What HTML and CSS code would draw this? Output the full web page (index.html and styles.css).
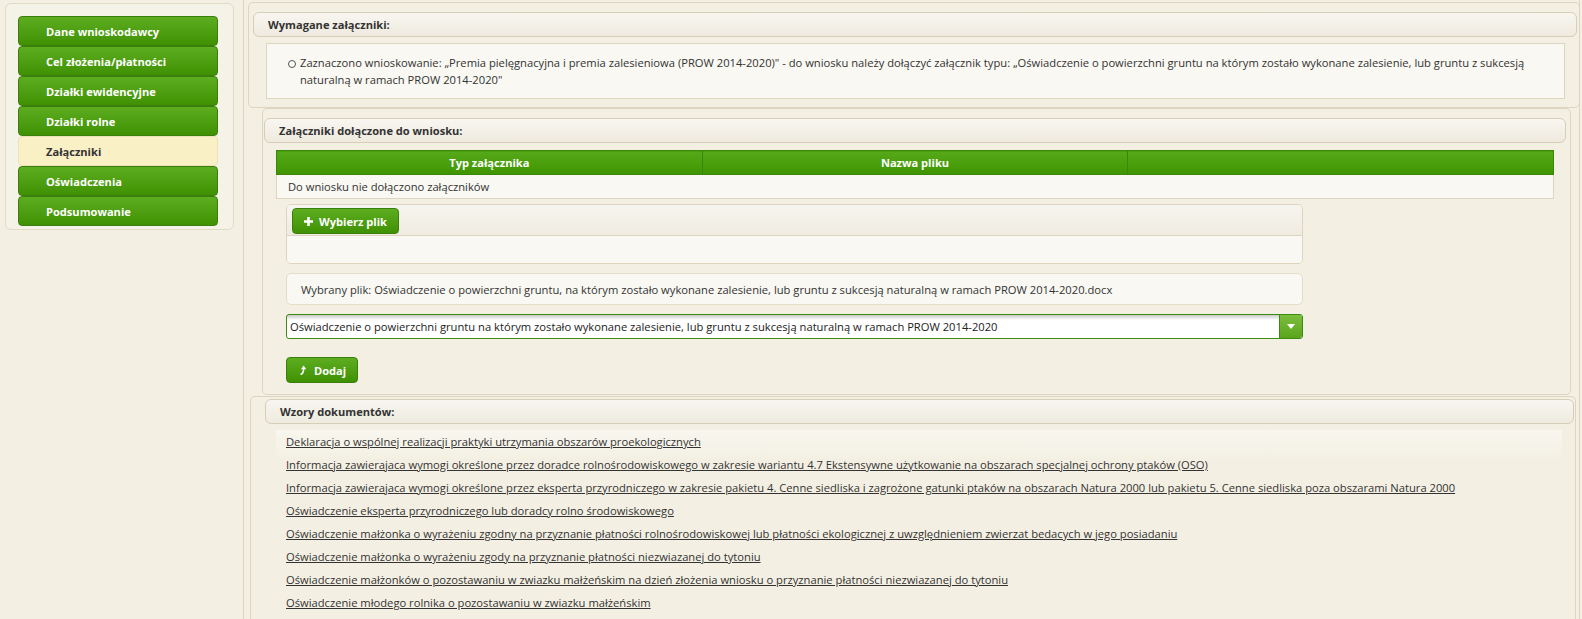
FILE: index.html
```html
<!DOCTYPE html>
<html lang="pl">
<head>
<meta charset="utf-8">
<title>Załączniki</title>
<link rel="stylesheet" href="styles.css">
</head>
<body>
<div class="page">
  <aside class="sidebar">
    <nav class="menu">
      <a class="menu-item">Dane wnioskodawcy</a>
      <a class="menu-item">Cel złożenia/płatności</a>
      <a class="menu-item">Działki ewidencyjne</a>
      <a class="menu-item">Działki rolne</a>
      <a class="menu-item active">Załączniki</a>
      <a class="menu-item">Oświadczenia</a>
      <a class="menu-item">Podsumowanie</a>
    </nav>
  </aside>
  <main class="main">
    <section class="sec sec-req">
      <div class="bar">Wymagane załączniki:</div>
      <div class="req-box">
        <ul class="req-list">
          <li>Zaznaczono wnioskowanie: „Premia pielęgnacyjna i premia zalesieniowa (PROW 2014-2020)" - do wniosku należy dołączyć załącznik typu: „Oświadczenie o powierzchni gruntu na którym zostało wykonane zalesienie, lub gruntu z sukcesją naturalną w ramach PROW 2014-2020"</li>
        </ul>
      </div>
    </section>
    <section class="sec sec-att">
      <div class="bar">Załączniki dołączone do wniosku:</div>
      <table class="att-table">
        <thead>
          <tr><th>Typ załącznika</th><th>Nazwa pliku</th><th></th></tr>
        </thead>
        <tbody>
          <tr><td colspan="3">Do wniosku nie dołączono załączników</td></tr>
        </tbody>
      </table>
      <div class="upload">
        <div class="upload-top">
          <button class="btn btn-pick"><svg class="ico" width="9" height="9" viewBox="0 0 9 9"><path d="M3.2 0h2.6v3.2H9v2.6H5.8V9H3.2V5.8H0V3.2h3.2z" fill="#fff"/></svg>Wybierz plik</button>
        </div>
        <div class="upload-body"></div>
      </div>
      <div class="chosen">Wybrany plik: Oświadczenie o powierzchni gruntu, na którym zostało wykonane zalesienie, lub gruntu z sukcesją naturalną w ramach PROW 2014-2020.docx</div>
      <div class="select">
        <span class="select-text">Oświadczenie o powierzchni gruntu na którym zostało wykonane zalesienie, lub gruntu z sukcesją naturalną w ramach PROW 2014-2020</span>
        <span class="select-arrow"><svg width="8" height="5" viewBox="0 0 8 5"><path d="M0 0h8L4 5z" fill="#fff"/></svg></span>
      </div>
      <button class="btn btn-add"><svg class="ico" width="8" height="10" viewBox="0 0 8 10"><path d="M1.5 9.5C4 9 4.6 7 4.6 3.6" fill="none" stroke="#fff" stroke-width="1.6"/><path d="M2 4.2L4.6 0.6 7.2 4.2z" fill="#fff"/></svg>Dodaj</button>
    </section>
    <section class="sec sec-docs">
      <div class="bar">Wzory dokumentów:</div>
      <div class="links">
        <a href="#">Deklaracja o wspólnej realizacji praktyki utrzymania obszarów proekologicznych</a>
        <a href="#">Informacja zawierajaca wymogi określone przez doradce rolnośrodowiskowego w zakresie wariantu 4.7 Ekstensywne użytkowanie na obszarach specjalnej ochrony ptaków (OSO)</a>
        <a href="#">Informacja zawierajaca wymogi określone przez eksperta przyrodniczego w zakresie pakietu 4. Cenne siedliska i zagrożone gatunki ptaków na obszarach Natura 2000 lub pakietu 5. Cenne siedliska poza obszarami Natura 2000</a>
        <a href="#">Oświadczenie eksperta przyrodniczego lub doradcy rolno środowiskowego</a>
        <a href="#">Oświadczenie małżonka o wyrażeniu zgodny na przyznanie płatności rolnośrodowiskowej lub płatności ekologicznej z uwzględnieniem zwierzat bedacych w jego posiadaniu</a>
        <a href="#">Oświadczenie małżonka o wyrażeniu zgody na przyznanie płatności niezwiazanej do tytoniu</a>
        <a href="#">Oświadczenie małżonków o pozostawaniu w zwiazku małżeńskim na dzień złożenia wniosku o przyznanie płatności niezwiazanej do tytoniu</a>
        <a href="#">Oświadczenie młodego rolnika o pozostawaniu w zwiazku małżeńskim</a>
      </div>
    </section>
  </main>
</div>
</body>
</html>
```
FILE: styles.css
```css
* { box-sizing: border-box; }
html, body { margin: 0; padding: 0; }
body {
  background: #f3f0e3;
  font-family: "Open Sans", "Noto Sans", "DejaVu Sans", sans-serif;
  font-size: 11.2px;
  color: #333;
  overflow: hidden;
}
.page {
  display: flex;
  align-items: flex-start;
  height: 619px;
}
/* sidebar */
.sidebar {
  width: 229px;
  height: 227px;
  margin: 3px 0 0 5px;
  padding: 12px 0 0 12px;
  background: #f5f2e8;
  border: 1px solid #e2dbc6;
  border-radius: 6px;
  flex: none;
}
.menu { display: flex; flex-direction: column; width: 200px; }
.menu-item {
  display: flex;
  align-items: center;
  height: 30px;
  padding-left: 27px;
  background: linear-gradient(#5ead21, #3f9102);
  border: 1px solid #3a7e0c;
  border-radius: 4px;
  color: #fff;
  font-weight: 700;
  font-size: 11.1px;
  text-decoration: none;
}
.menu-item.active {
  background: #faf0c6;
  border-color: #ede2b6;
  color: #333;
}
/* main */
.main {
  flex: none;
  width: 1337px;
  margin-left: 9px;
  height: 619px;
  border-left: 1px solid #ddd5bf;
  border-right: 1px solid #ddd5bf;
}
.sec {
  border: 1px solid #ddd5bf;
  border-radius: 5px;
}
.bar {
  height: 25px;
  display: flex;
  align-items: center;
  padding-left: 14px;
  background: linear-gradient(#f8f6f0, #eeeadf);
  border: 1px solid #d6ceb6;
  border-radius: 6px;
  font-weight: 700;
  font-size: 11.1px;
}
.sec-req {
  margin: 2px -1px 0 4px;
  padding: 9px 2px 8px 4px;
}
.req-box {
  margin: 6px 12px 0 13px;
  height: 56px;
  background: #f9f8f2;
  border: 1px solid #ddd5bf;
  padding: 10px 20px 0 0;
}
.req-list { list-style: none; margin: 0; padding: 0; }
.req-list li {
  position: relative;
  padding-left: 33px;
  line-height: 17px;
}
.req-list li::before {
  content: "";
  position: absolute;
  left: 21px;
  top: 6px;
  width: 6px;
  height: 6px;
  border: 1px solid #555;
  border-radius: 50%;
}
.sec-att {
  margin: 0 8px 0 18px;
  padding: 9px 4px 11px 1px;
}
.att-table {
  margin: 7px 12px 0 12px;
  width: calc(100% - 24px);
  border-collapse: collapse;
  table-layout: fixed;
}
.att-table th {
  height: 24px;
  padding: 0;
  background: linear-gradient(#56aa1a, #3f9400);
  border: 1px solid #3a8608;
  color: #fff;
  font-weight: 700;
  font-size: 11.1px;
  text-align: center;
}
.att-table td {
  height: 24px;
  padding: 0 0 0 11px;
  background: #f9f8f2;
  border: 1px solid #ddd5bf;
}
.upload {
  margin: 5px 0 0 22px;
  width: 1017px;
  border: 1px solid #ddd5bf;
  border-radius: 5px;
  overflow: hidden;
}
.upload-top {
  height: 31px;
  padding: 3px 0 0 5px;
  background: linear-gradient(#f7f5ef, #efebe0);
  border-bottom: 1px solid #ddd5bf;
}
.upload-body { height: 27px; background: #f9f8f2; }
.btn {
  display: inline-flex;
  align-items: center;
  gap: 6px;
  height: 26px;
  padding: 0 10px;
  background: linear-gradient(#5ead21, #3f9102);
  border: 1px solid #3a7e0c;
  border-radius: 4px;
  color: #fff;
  font-family: inherit;
  font-weight: 700;
  font-size: 11.1px;
  white-space: nowrap;
}
.btn-pick { padding-left: 11px; padding-right: 11px; gap: 6px; }
.chosen {
  margin: 9px 0 0 22px;
  width: 1017px;
  height: 32px;
  display: flex;
  align-items: center;
  padding-left: 14px;
  background: #f9f8f2;
  border: 1px solid #e3dcc7;
  border-radius: 5px;
}
.select {
  margin: 9px 0 0 22px;
  width: 1017px;
  height: 25px;
  display: flex;
  border: 1px solid #3d8a10;
  border-radius: 3px;
  overflow: hidden;
  background: linear-gradient(#c9c9c9, #fff 5px);
}
.select-text {
  flex: 1;
  display: flex;
  align-items: center;
  padding-left: 3px;
  color: #222;
}
.select-arrow {
  width: 23px;
  display: flex;
  align-items: center;
  justify-content: center;
  border-left: 1px solid #3d8a10;
  background: linear-gradient(#7cbd3c, #5aa51d);
}
.btn-add {
  margin: 18px 0 0 22px;
  padding-left: 12px;
  padding-right: 11px;
  gap: 7px;
}
.sec-docs {
  margin: 1px 3px 0 6px;
  padding: 2px 1px 0 14px;
  border-bottom: none;
  height: 240px;
}
.links {
  margin: 6px 12px 0 11px;
  padding-left: 10px;
  display: flex;
  flex-direction: column;
  background: linear-gradient(#f8f6ee, #f3f0e3 30px);
}
.links a {
  line-height: 23px;
  color: #333;
  text-decoration: underline;
}
```
